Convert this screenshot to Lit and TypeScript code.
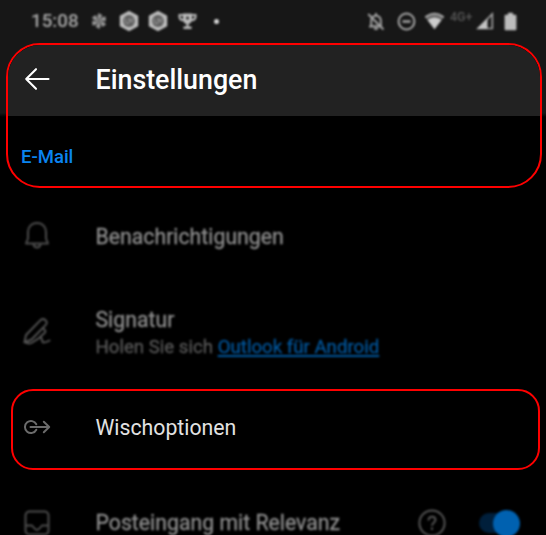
import { LitElement, html, css, svg } from "lit";
import { customElement, property } from "lit/decorators.js";

const hexBadge = html`<svg class="hex" width="20" height="22" viewBox="0 0 20 22">
  <path d="M10 .8 19.200 5.700v10.600L10 21.200.8 16.300V5.700Z" fill="#bcbcbc" />
  <circle cx="10" cy="11" r="5.900" fill="#5c5c5c" />
  <path d="M6.500 8.500v3.500q1.500 2.800 3.500.8V8.500M10 8l3.500 5M13.500 8v3" fill="none" stroke="#999" stroke-width="1.100" />
</svg>`;

@customElement("status-bar")
export class StatusBar extends LitElement {
  static styles = css`
    :host {
      display: block;
      height: 43px;
      flex: none;
      color: #a8a8a8;
    }
    .bar { display: flex; justify-content: space-between; filter: blur(0.9px); }
    .side {
      display: flex;
      align-items: center;
      height: 42px;
    }
    .left { padding-left: 31px; }
    .right { padding-right: 29px; }
    .time { font-size: 18.8px; font-weight: 500; width: 48px; line-height: 44px; }
    .pinwheel { margin-left: 11px; }
    .hex { margin-left: 11px; }
    .hex + .hex { margin-left: 9px; }
    .cup { margin-left: 10px; }
    .dot { width: 5px; height: 5px; border-radius: 50%; background: #d8d8d8; margin-left: 17px; }
    .dnd { margin-left: 12px; }
    .wifi { margin-left: 8px; }
    .net { color: #585858; font-size: 12.4px; font-weight: 500; width: 23px; margin: -8px 0 0 5px; white-space: nowrap; }
    .signal { margin-left: 3px; }
    .battery { margin-left: 10px; }
  `;

  render() {
    return html`
      <div class="bar">
        <div class="side left">
          <span class="time">15:08</span>
          <svg class="pinwheel" width="18" height="18" viewBox="0 0 18 18" fill="#969696">
            ${[0, 60, 120, 180, 240, 300].map(
              (a) => svg`<path d="M9 9 7.400 4.500 8.500 1 12.500 3.200 10.500 6Z" transform=${`rotate(${a} 9 9)`} />`
            )}
          </svg>
          ${hexBadge}${hexBadge}
          <svg class="cup" width="19" height="18" viewBox="0 0 19 18">
            <path d="M5 1.500h9V8q-.7 3.400-3.400 3.800v2.700h3V17H5.400v-2.500h3v-2.700Q5.700 11.400 5 8Z" fill="#bcbcbc" />
            <path d="M5 3H1.500v2Q2 8 5.500 8.300M14 3h3.500v2q-.5 3-4 3.300" fill="none" stroke="#bcbcbc" stroke-width="2" />
            <circle cx="9.500" cy="6" r="1.500" fill="#222" />
          </svg>
          <span class="dot"></span>
        </div>
        <div class="side right">
          <svg width="18" height="19" viewBox="0 0 18 19" fill="none" stroke="#a2a2a2" stroke-width="2">
            <path d="M4.200 14.300V8.500q.2-4.200 4.800-5 4.600.8 4.800 5v5.800ZM2 14.400h13M9 1v3" />
            <path d="M1.200 2 16.500 17.500" />
            <path d="M7 16.800h4" />
          </svg>
          <svg class="dnd" width="19" height="19" viewBox="0 0 19 19" fill="none" stroke="#a8a8a8" stroke-width="2">
            <circle cx="9.500" cy="9.500" r="7.900" />
            <path d="M5.500 9.500h8" stroke-width="2.400" />
          </svg>
          <svg class="wifi" width="21" height="18" viewBox="0 0 21 18">
            <path d="M1 5Q10.500-2.500 20 5L10.500 17Z" fill="#666" />
            <path d="M1.300 5.200Q10.500-1.800 19.700 5.200" fill="none" stroke="#b5b5b5" stroke-width="1.800" />
            <path d="M3.500 8Q10.500 3 17.500 8L10.500 17.300Z" fill="#ccc" />
          </svg>
          <span class="net">4G+</span>
          <svg class="signal" width="18" height="18" viewBox="0 0 18 18">
            <path d="M16.300 2v14.500H2Z" fill="none" stroke="#a0a0a0" stroke-width="1.700" />
            <path d="M11.500 6.500V17H1Z" fill="#c4c4c4" />
          </svg>
          <svg class="battery" width="13" height="19" viewBox="0 0 13 19">
            <path d="M1.500 2.800h2.500V.8h5v2h2.500q.9 0 .9 1v13.500q0 1-.9 1h-10q-.9 0-.9-1V3.800q0-1 .9-1Z" fill="#bcbcbc" />
          </svg>
        </div>
      </div>
    `;
  }
}

@customElement("setting-row")
export class SettingRow extends LitElement {
  @property({ type: Boolean, reflect: true }) dim = false;

  static styles = css`
    :host {
      display: flex;
      align-items: center;
      box-sizing: border-box;
      padding: 0 26px 0 20px;
      flex: none;
      color: #e2e2e2;
    }
    :host([dim]) { filter: blur(0.9px); color: #8e8e8e; -webkit-text-stroke: 0.3px; }
    .icon { width: 34px; display: flex; justify-content: center; margin-right: 41.5px; }
    .body { flex: 1; }
    .end { display: flex; align-items: center; }
  `;

  render() {
    return html`
      <div class="icon"><slot name="icon"></slot></div>
      <div class="body"><slot></slot></div>
      <div class="end"><slot name="end"></slot></div>
    `;
  }
}

@customElement("app-root")
export class AppRoot extends LitElement {
  static styles = css`
    :host {
      display: flex;
      flex-direction: column;
      height: 535px;
      overflow: hidden;
      background: linear-gradient(#171717 113px, #000 117px) #000;
      font-family: Roboto, sans-serif;
      font-size: 21.25px;
      line-height: 28px;
    }
    svg { display: block; }
    .marked { box-sizing: border-box; border: 2px solid #f00; overflow: hidden; flex: none; }
    .top { height: 145px; margin: 0 4px 0 6px; border-radius: 34px; background: #000; }
    .appbar {
      display: flex;
      align-items: center;
      box-sizing: border-box;
      height: 71px;
      padding: 0 0 4px 16px;
      background: #222;
      color: #fff;
    }
    .title { margin: 2px 0 0 44.500px; font-size: 26.8px; font-weight: 500; line-height: 32px; }
    .section { margin: 27px 0 0 13px; font-size: 18.5px; font-weight: 500; color: #0a84f0; }
    .bell { height: 97px; }
    .bell svg { margin-top: -3px; }
    .signature { height: 95px; }
    .signature svg { margin-top: -4px; }
    .swipe { height: 81px; margin: 9px 6px 0 11px; border-radius: 22px; }
    .swipe setting-row { height: 73px; padding-left: 7px; }
    .swipe svg { margin-top: -2px; }
    .focused { height: 106px; }
    .label { display: block; }
    .sub { display: block; font-size: 18.65px; line-height: 26px; color: #585858; }
    .link { color: #00569c; text-decoration: underline; text-decoration-thickness: 2px; text-underline-offset: 2px; }
    .help { margin-right: 32px; }
    .switch { display: flex; align-items: center; justify-content: flex-end; width: 42px; height: 27px; }
    .track { width: 30px; height: 20px; border-radius: 10px; background: #001f3b; margin-right: -16px; }
    .knob { width: 27px; height: 27px; border-radius: 50%; background: #0061b0; position: relative; }
  `;

  render() {
    return html`
      <status-bar></status-bar>
      <section class="marked top">
        <header class="appbar">
          <svg width="27" height="24" viewBox="0 0 27 24" fill="none" stroke="#fff" stroke-width="2.100" stroke-linecap="round" stroke-linejoin="round">
            <path d="M12 2.200 2.200 12 12 21.800M2.200 12h22.300" />
          </svg>
          <h1 class="title">Einstellungen</h1>
        </header>
        <div class="section">E-Mail</div>
      </section>

      <setting-row class="bell" dim>
        <svg slot="icon" width="26" height="28" viewBox="0 0 26 28" fill="none" stroke="#4c4c4c" stroke-width="2" stroke-linejoin="round">
          <path d="M13 2C7.500 2 4 6 4 11v6.500L2 22.500h22l-2-5V11C22 6 18.500 2 13 2Z" />
          <path d="M9.500 23q.5 3.500 3.500 3.500t3.500-3.500" />
        </svg>
        <span class="label">Benachrichtigungen</span>
      </setting-row>

      <setting-row class="signature" dim>
        <svg slot="icon" width="28" height="28" viewBox="0 0 28 28" fill="none" stroke="#545454" stroke-width="1.900" stroke-linejoin="round" stroke-linecap="round">
          <path d="M1.500 25.200 3 18 17.500 3.200q2.500-2.300 5 0t0 5L8.500 22.500Z" />
          <path d="M20 11.500 22 13q1 1.500-.5 3L17 20" />
          <path d="M1.500 25.200Q6 27.500 9.500 25.500C12.500 23.500 16 20.500 18 20.800S18 25.500 20.500 25.500 24 25 26.500 23.500" />
        </svg>
        <span class="label">Signatur</span>
        <span class="sub">Holen Sie sich <span class="link">Outlook für Android</span></span>
      </setting-row>

      <section class="marked swipe">
        <setting-row>
          <svg slot="icon" width="28" height="16" viewBox="0 0 28 16" fill="none" stroke="#6b6b6b" stroke-width="2" stroke-linecap="round" stroke-linejoin="round">
            <path d="M13.300 5.300A6 6 0 1 0 13.300 10.700M7.500 8H26M20.800 2.800 26.200 8 20.800 13.200" />
          </svg>
          <span class="label">Wischoptionen</span>
        </setting-row>
      </section>

      <setting-row class="focused" dim>
        <svg slot="icon" width="26" height="26" viewBox="0 0 26 26" fill="none" stroke="#4c4c4c" stroke-width="2" stroke-linejoin="round">
          <rect x="1.500" y="1.500" width="23" height="23" rx="4" />
          <path d="M1.500 15.500H8q3.500 4.500 5 4.500t5-4.500h6.500" />
        </svg>
        <span class="label">Posteingang mit Relevanz</span>
        <svg slot="end" class="help" width="28" height="28" viewBox="0 0 28 28" fill="none" stroke="#545454" stroke-width="2">
          <circle cx="14" cy="14" r="12.600" />
          <path d="M10.500 11.500q0-3.700 3.500-3.700t3.500 3.300c0 2.400-3.500 2.600-3.500 5.600M14 18.500v2.500" />
        </svg>
        <span slot="end" class="switch"><span class="track"></span><span class="knob"></span></span>
      </setting-row>
    `;
  }
}
